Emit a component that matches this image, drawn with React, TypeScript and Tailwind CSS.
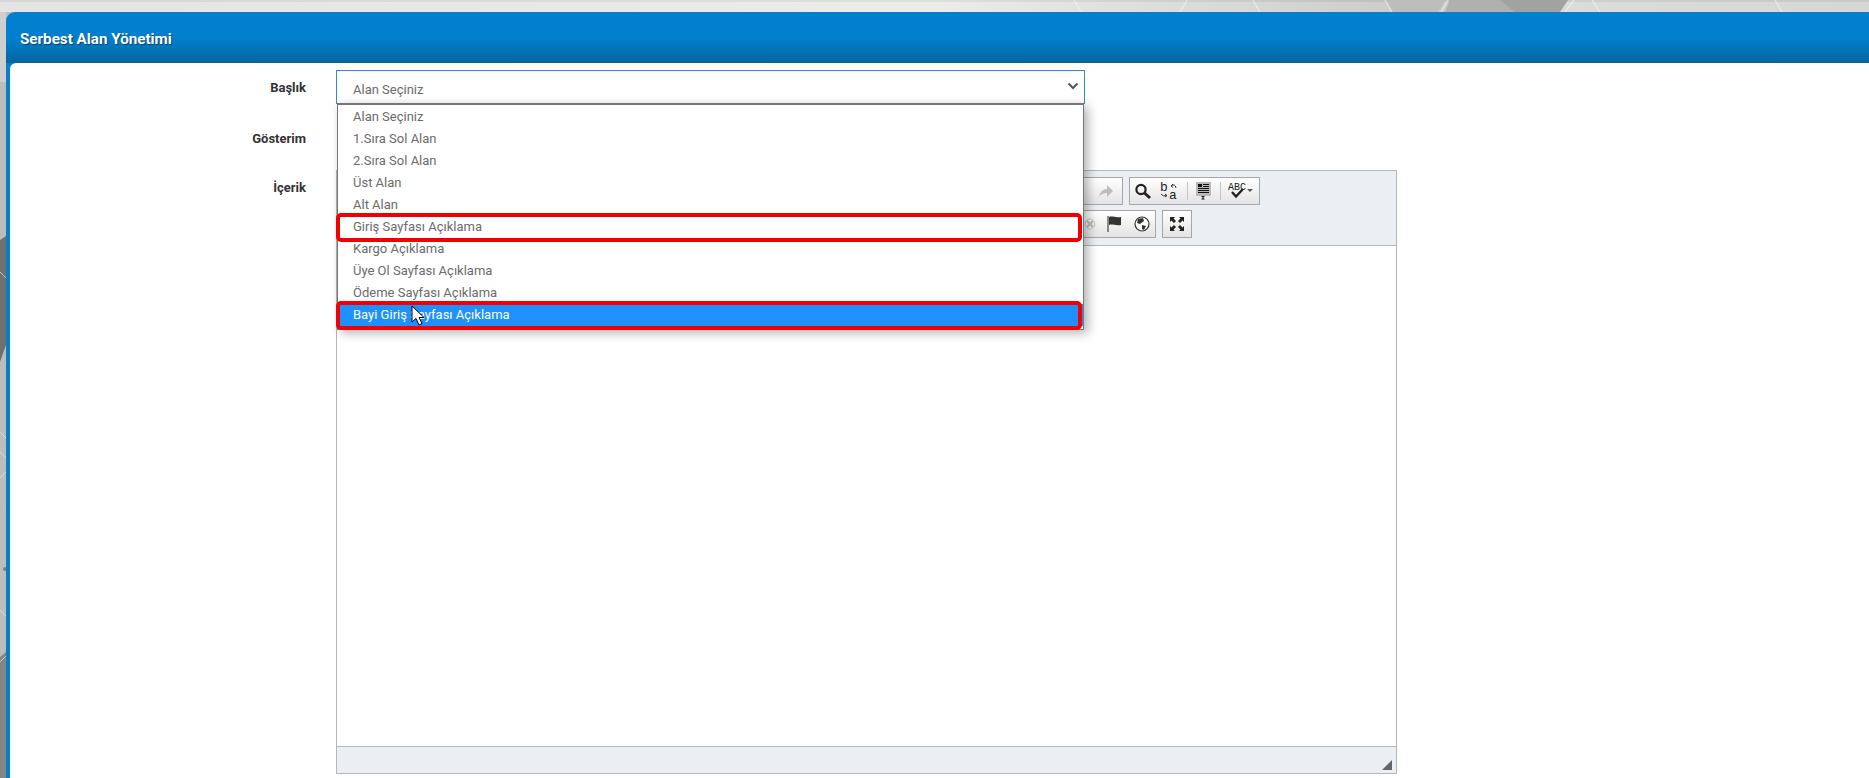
import React from 'react';

const OPTIONS = [
  'Alan Seçiniz',
  '1.Sıra Sol Alan',
  '2.Sıra Sol Alan',
  'Üst Alan',
  'Alt Alan',
  'Giriş Sayfası Açıklama',
  'Kargo Açıklama',
  'Üye Ol Sayfası Açıklama',
  'Ödeme Sayfası Açıklama',
  'Bayi Giriş Sayfası Açıklama',
];

const FONT = 'font-["Roboto","Liberation_Sans",sans-serif]';

function PageBackdrop() {
  return (
    <svg className="absolute inset-0" width="1869" height="778" viewBox="0 0 1869 778">
      <defs>
        <linearGradient id="top" x1="0" x2="1" y1="0" y2="0">
          <stop offset="0" stopColor="#e4e4e4" />
          <stop offset="0.5" stopColor="#ececec" />
          <stop offset="0.68" stopColor="#d6d6d6" />
          <stop offset="0.8" stopColor="#c4c4c4" />
          <stop offset="0.84" stopColor="#dcdcdc" />
          <stop offset="1" stopColor="#d6d6d6" />
        </linearGradient>
        <linearGradient id="left" x1="0" x2="1" y1="0" y2="0">
          <stop offset="0" stopColor="#bdbdbd" />
          <stop offset="1" stopColor="#a4a4a4" />
        </linearGradient>
      </defs>
      <rect width="1869" height="778" fill="url(#left)" />
      <rect width="1869" height="12" fill="url(#top)" />
      <rect width="1869" height="2" fill="#000" opacity="0.06" />
      {/* top strip facets */}
      <polygon points="1385,0 1445,0 1438,12 1392,12" fill="#bdbdbd" />
      <polygon points="1450,0 1565,0 1558,12 1445,12" fill="#b0b0b0" />
      <polygon points="1500,0 1568,0 1560,12 1515,12" fill="#a2a2a2" />
      <path d="M1074 0 L1081 12 M1187 0 L1180 12 M1253 0 L1260 12 M1385 0 L1392 12 M1448 0 L1441 12 M1574 0 L1565 12 M1592 0 L1600 12 M1775 0 L1782 12" stroke="#f2f2f2" strokeWidth="1.5" opacity="0.6" />
      {/* left strip facets */}
      <rect y="12" width="6" height="70" fill="#cfcfcf" />
      <polygon points="0,240 6,236 6,345 0,362" fill="#707070" />
      <polygon points="0,657 6,652 6,778 0,778" fill="#858585" />
      <path d="M0 272 L6 278 M0 432 L6 438 M0 452 L6 458 M0 478 L6 472 M0 610 L6 616 M0 662 L6 656" stroke="#e4e4e4" strokeWidth="1" opacity="0.7" />
      <circle cx="5" cy="569" r="2" fill="#808080" />
    </svg>
  );
}

function ToolGroup({ className, children }: { className?: string; children?: React.ReactNode }) {
  return (
    <div className={`flex h-[28px] items-center justify-end border border-[#a6a6a6] bg-gradient-to-b from-[#ffffff] to-[#e4e4e4] ${className ?? ''}`}>
      {children}
    </div>
  );
}

function Sep() {
  return <div className="mx-[1px] h-[18px] w-px bg-[#c4c4c4]" />;
}

function Icon({ children, w = 27 }: { children: React.ReactNode; w?: number }) {
  return (
    <svg width={w} height="20" viewBox={`0 0 ${w} 20`} className="shrink-0 overflow-visible">
      {children}
    </svg>
  );
}

function Toolbar() {
  return (
    <div className="flex h-[75px] flex-col gap-[5px] border-b border-[#b6b6b6] bg-[#ebeef3] pt-[6px] pl-[6px]">
      <div className="flex gap-[6px]">
        <ToolGroup className="w-[780px] pr-[5px]">
          <Icon w={20}>
            <path d="M2 16 C3 10 7 8 10 8 V4 L16 10 L10 16 V12 C7 12 4 13 2 16 Z" fill="#bdbdbd" />
          </Icon>
        </ToolGroup>
        <ToolGroup className="w-[131px] pr-[1px]">
          <Icon w={27}>
            <circle cx="10" cy="8.500" r="4.600" fill="none" stroke="#222" strokeWidth="2.200" />
            <path d="M13.500 12 L19 17" stroke="#222" strokeWidth="3" />
          </Icon>
          <Icon w={28}>
            <text x="2" y="10" fontSize="13" fontFamily="Liberation Mono" fill="#222">b</text>
            <text x="11" y="18" fontSize="13" fontFamily="Liberation Mono" fill="#222">a</text>
            <path d="M13 5 Q17 2 18 7 M13 5 L15 3 M13 5 L15 6.500 M3 13 Q5 16 9 14.500 M9 14.500 L7 13 M9 14.500 L7 16" stroke="#333" strokeWidth="1" fill="none" />
          </Icon>
          <Sep />
          <Icon w={30}>
            <rect x="7" y="1" width="15" height="14" fill="#b9b9b9" />
            <rect x="9" y="3" width="4" height="3" fill="#111" />
            <path d="M14 3.500 H20 M14 5.500 H20 M9 7.500 H20 M9 9.500 H20 M9 11.500 H20 M14 15 V18 M12.500 15.500 H15.500 M12.500 18 H15.500" stroke="#111" strokeWidth="1" />
          </Icon>
          <Sep />
          <Icon w={36}>
            <text x="6" y="9" fontSize="10" fontFamily="Liberation Mono" fill="#222">ABC</text>
            <path d="M10 11 L14 15.500 L21 8" stroke="#222" strokeWidth="2.400" fill="none" />
            <path d="M25 8 H31 L28 11 Z" fill="#555" />
          </Icon>
        </ToolGroup>
      </div>
      <div className="flex gap-[6px]">
        <ToolGroup className="w-[813px]">
          <Icon w={20}>
            <path d="M5 7 L11 13 M11 7 L5 13" stroke="#b8b8b8" strokeWidth="2" />
            <circle cx="8" cy="10" r="5" fill="none" stroke="#c8c8c8" strokeWidth="1" />
          </Icon>
          <Icon w={26}>
            <path d="M6 2 V18" stroke="#222" strokeWidth="1" />
            <path d="M7 3 C10 1.500 13 4 19 3 V11 C13 12 10 9.500 7 11 Z" fill="#333" />
          </Icon>
          <Icon w={27}>
            <circle cx="14" cy="10" r="7" fill="#fff" stroke="#333" strokeWidth="1.200" />
            <path d="M10 5 L15 4 L16 7 L12 10 L9 9 Z M14 11 L18 12 L16 16 L14 15 Z" fill="#333" />
          </Icon>
        </ToolGroup>
        <ToolGroup className="w-[30px] pr-[6px]">
          <svg width="16" height="16" viewBox="0 0 16 16" fill="#222">
            <path d="M1 1 H6 L4.500 2.500 L7 5 L5 7 L2.500 4.500 L1 6 Z" />
            <path d="M15 1 V6 L13.500 4.500 L11 7 L9 5 L11.500 2.500 L10 1 Z" />
            <path d="M1 15 V10 L2.500 11.500 L5 9 L7 11 L4.500 13.500 L6 15 Z" />
            <path d="M15 15 H10 L11.500 13.500 L9 11 L11 9 L13.500 11.500 L15 10 Z" />
          </svg>
        </ToolGroup>
      </div>
    </div>
  );
}

function Editor() {
  return (
    <div className="flex h-[604px] w-[1061px] flex-col border border-[#b6b6b6] bg-white">
      <Toolbar />
      <div className="flex-1" />
      <div className="flex h-[27px] items-end justify-end border-t border-[#b6b6b6] bg-[#ebeef3] pr-[4px] pb-[3px]">
        <div className="h-0 w-0 border-b-[10px] border-l-[10px] border-b-[#666] border-l-transparent" />
      </div>
    </div>
  );
}

function CursorArrow() {
  return (
    <svg className="absolute top-[1px] left-[73px] z-20" width="16" height="22" viewBox="0 0 16 22">
      <path d="M1 1 V17 L5 13.500 L8 20 L11 18.500 L8 12.500 H13 Z" fill="#fff" stroke="#000" strokeWidth="1" />
    </svg>
  );
}

function Dropdown() {
  return (
    <div className="absolute top-full right-0 left-0 z-10 flex h-[227px] flex-col border border-t-2 border-[#767676] bg-white pt-[1px] shadow-[4px_3px_10px_rgba(0,0,0,0.3)]">
      {OPTIONS.map((o, i) => {
        const active = i === 9;
        const marked = i === 5 || i === 9;
        return (
          <div
            key={o}
            className={`relative flex h-[22px] shrink-0 items-center pl-[15px] text-[13px] ${active ? 'bg-[#1e90ff] text-white' : 'text-[#6b6b6b]'}`}
          >
            {o}
            {active && <CursorArrow />}
            {marked && (
              <span className="absolute -top-[3px] right-[1px] -bottom-[4px] -left-[2px] z-10 rounded-[5px] border-[4px] border-[#f00000]" />
            )}
          </div>
        );
      })}
    </div>
  );
}

function BaslikSelect() {
  return (
    <div className="relative flex h-[34px] w-[749px] items-center justify-between border border-[#2f8fc7] bg-white pt-[6px] pr-[5px] pl-[16px] text-[13px] text-[#6b6b6b]">
      Alan Seçiniz
      <svg className="-mt-[8px]" width="12" height="8" viewBox="0 0 12 8">
        <path d="M1.500 1.500 L6 6 L10.500 1.500" fill="none" stroke="#555" strokeWidth="2" />
      </svg>
      <Dropdown />
    </div>
  );
}

function FieldLabel({ children }: { children: React.ReactNode }) {
  return <div className="w-[296px] shrink-0 text-right text-[13px] font-bold text-[#333]">{children}</div>;
}

export default function App() {
  return (
    <div className={`relative h-[778px] w-[1869px] overflow-hidden ${FONT}`}>
      <PageBackdrop />
      <div className="relative flex h-[778px] flex-col pt-[12px] pl-[6px]">
        <div className="flex h-[51px] shrink-0 items-center rounded-tl-[9px] bg-gradient-to-b from-[#0280cf] from-50% to-[#03669f] pt-[3px] pl-[14px] text-[15.200px] font-bold text-white [text-shadow:1px_1px_1px_rgba(0,0,0,0.45)]">
          Serbest Alan Yönetimi
        </div>
        <div className="flex-1 bg-[#0280cf] pl-[4px]">
          <div className="flex h-full flex-col rounded-tl-[6px] bg-white pt-[7px]">
            <div className="relative z-10 flex gap-[30px]">
              <div className="flex h-[34px] items-start pt-[8px]">
                <FieldLabel>Başlık</FieldLabel>
              </div>
              <BaslikSelect />
            </div>
            <div className="flex h-[66px] items-start pt-[25px]">
              <FieldLabel>Gösterim</FieldLabel>
            </div>
            <div className="flex gap-[30px]">
              <div className="pt-[8px]">
                <FieldLabel>İçerik</FieldLabel>
              </div>
              <Editor />
            </div>
          </div>
        </div>
      </div>
    </div>
  );
}
